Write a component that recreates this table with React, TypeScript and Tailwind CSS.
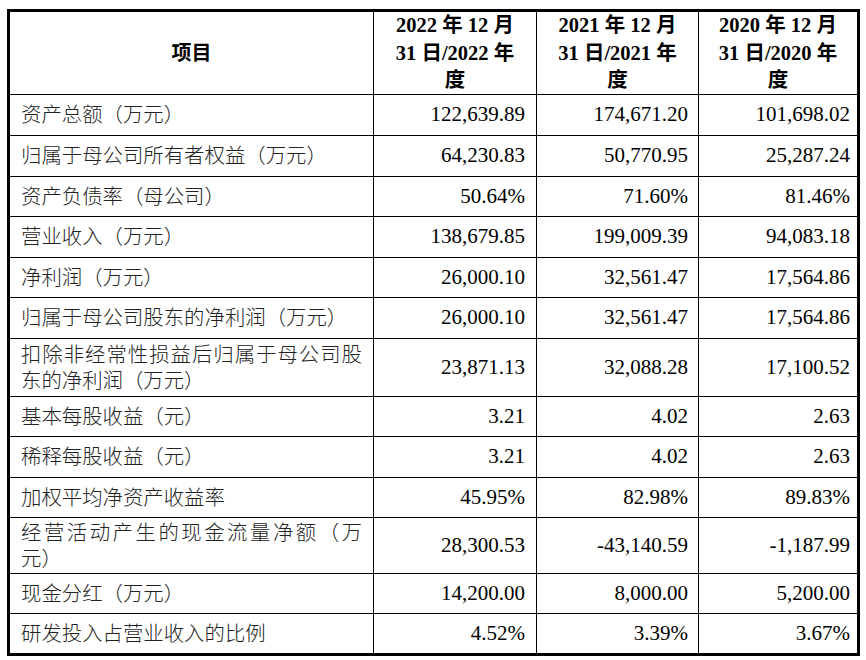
import React from "react";

type Row = { label: string; v: [string, string, string]; h: string; justify?: boolean };

const rows: Row[] = [
  { label: "资产总额（万元）", v: ["122,639.89", "174,671.20", "101,698.02"], h: "h-[41px]" },
  { label: "归属于母公司所有者权益（万元）", v: ["64,230.83", "50,770.95", "25,287.24"], h: "h-[41px]" },
  { label: "资产负债率（母公司）", v: ["50.64%", "71.60%", "81.46%"], h: "h-[40px]" },
  { label: "营业收入（万元）", v: ["138,679.85", "199,009.39", "94,083.18"], h: "h-[41px]" },
  { label: "净利润（万元）", v: ["26,000.10", "32,561.47", "17,564.86"], h: "h-[40px]" },
  { label: "归属于母公司股东的净利润（万元）", v: ["26,000.10", "32,561.47", "17,564.86"], h: "h-[41px]" },
  { label: "扣除非经常性损益后归属于母公司股东的净利润（万元）", v: ["23,871.13", "32,088.28", "17,100.52"], h: "h-[58px]", justify: true },
  { label: "基本每股收益（元）", v: ["3.21", "4.02", "2.63"], h: "h-[40px]" },
  { label: "稀释每股收益（元）", v: ["3.21", "4.02", "2.63"], h: "h-[41px]" },
  { label: "加权平均净资产收益率", v: ["45.95%", "82.98%", "89.83%"], h: "h-[40px]" },
  { label: "经营活动产生的现金流量净额（万元）", v: ["28,300.53", "-43,140.59", "-1,187.99"], h: "h-[56px]", justify: true },
  { label: "现金分红（万元）", v: ["14,200.00", "8,000.00", "5,200.00"], h: "h-[40px]" },
  { label: "研发投入占营业收入的比例", v: ["4.52%", "3.39%", "3.67%"], h: "h-[40px]" },
];

const headers = [
  ["2022 年 12 月", "31 日/2022 年", "度"],
  ["2021 年 12 月", "31 日/2021 年", "度"],
  ["2020 年 12 月", "31 日/2020 年", "度"],
];

const pads = ["pr-[11px]", "pr-[10px]", "pr-[7px]"];

export default function App() {
  return (
    <div className="w-[866px] h-[660px] bg-white overflow-hidden">
      <div
        className="ml-[7px] mt-[9px] w-[853px] border-[3px] border-black text-black [text-spacing-trim:space-all]"
        style={{ fontFamily: '"Liberation Serif", "Noto Sans CJK SC", serif' }}
      >
        <div className="grid grid-cols-[363px_163px_162px_159px] h-[82px]">
          <div className="flex items-center justify-center font-bold text-[20px]">项目</div>
          {headers.map((h, i) => (
            <div
              key={i}
              className="border-l border-black flex flex-col items-center justify-center font-bold text-[20.5px] leading-[27.5px]"
            >
              {h.map((l, j) => (
                <div key={j} className="whitespace-pre">{l}</div>
              ))}
            </div>
          ))}
        </div>
        {rows.map((r, i) => (
          <div
            key={i}
            className={`grid grid-cols-[363px_163px_162px_159px] border-t border-black ${r.h}`}
          >
            <div
              className={`flex items-center pl-[11px] pr-[11px] text-[20.4px] leading-[26px] font-light text-[#222] ${
                r.justify ? "text-justify [text-align-last:left]" : ""
              }`}
            >
              <div className="w-full">{r.label}</div>
            </div>
            {r.v.map((v, j) => (
              <div
                key={j}
                className={`border-l border-black flex items-center justify-end ${pads[j]} text-[21px]`}
              >
                {v}
              </div>
            ))}
          </div>
        ))}
      </div>
    </div>
  );
}
